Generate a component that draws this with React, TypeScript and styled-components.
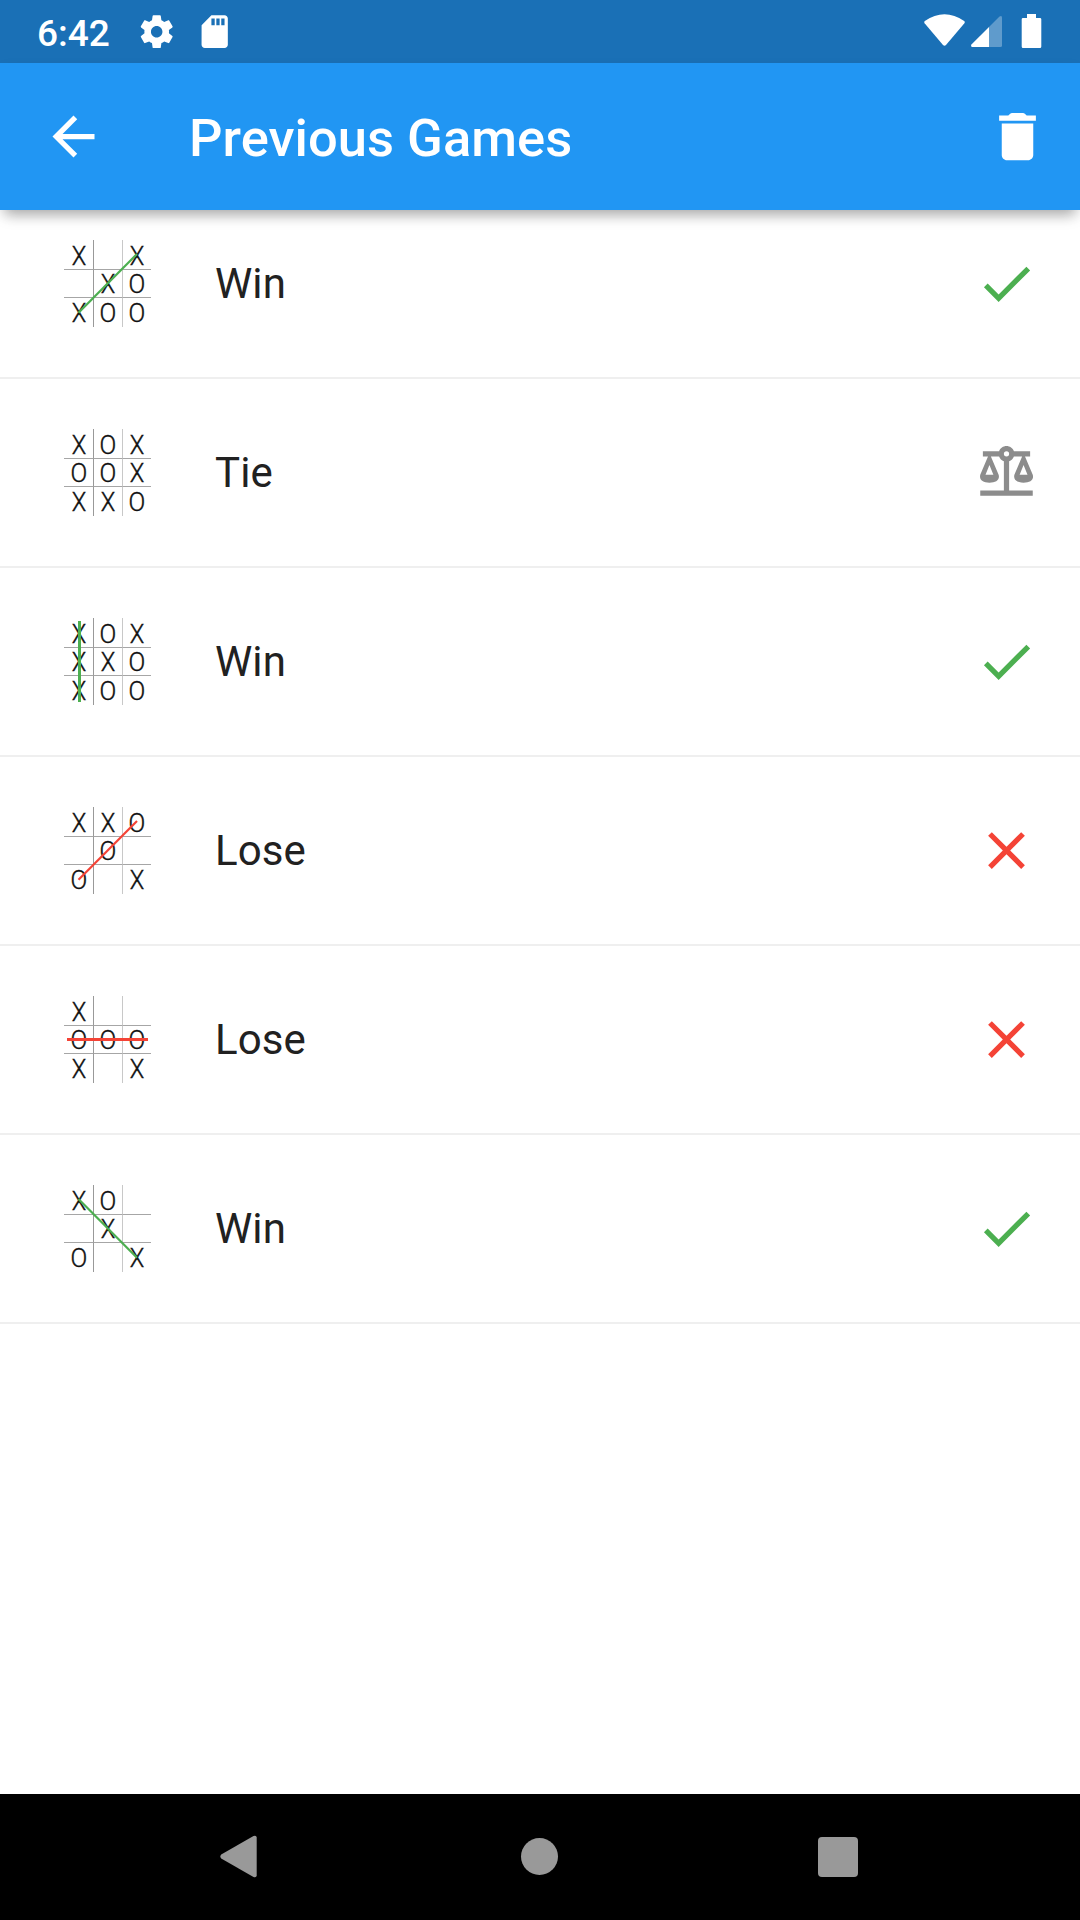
import React from 'react';
import styled, { createGlobalStyle } from 'styled-components';

const GlobalStyle = createGlobalStyle`
  html, body { margin: 0; padding: 0; background: #fff; }
  * { box-sizing: border-box; }
`;

const Screen = styled.div`
  display: flex;
  flex-direction: column;
  width: 1080px;
  height: 1920px;
  overflow: hidden;
  background: #fff;
  font-family: Roboto, sans-serif;
`;

const StatusBar = styled.header`
  display: flex;
  align-items: center;
  flex: none;
  height: 63px;
  padding: 0 38px 0 37px;
  background: #1a70b6;
  color: #fff;
`;

const Clock = styled.time`
  width: 100px;
  padding-top: 5px;
  font-size: 37px;
  font-weight: 500;
  line-height: 60px;
`;

const StatusGroup = styled.div<{ $gap: number }>`
  display: flex;
  align-items: center;
  gap: ${p => p.$gap}px;
`;

const Spacer = styled.div`
  flex: 1;
`;

const Glyph = styled.svg<{ $size: number; $lift?: number }>`
  display: block;
  flex: none;
  width: ${p => p.$size}px;
  height: ${p => p.$size}px;
  margin-bottom: ${p => (p.$lift ?? 0) * 2}px;
  fill: currentColor;
`;

const Signals = styled.svg`
  display: block;
  width: 118px;
  height: 63px;
  fill: currentColor;
`;

const AppBar = styled.nav`
  display: flex;
  align-items: center;
  flex: none;
  height: 147px;
  padding: 0 31.5px 0 42px;
  z-index: 1;
  background: #2196f3;
  color: #fff;
  box-shadow: 0 10px 13px -5px rgba(0, 0, 0, 0.27), 0 5px 14px -3px rgba(0, 0, 0, 0.12);
`;

const Title = styled.h1`
  flex: 1;
  margin: 0 0 0 84px;
  padding-top: 2px;
  font-size: 52.5px;
  font-weight: 500;
  line-height: 62px;
  letter-spacing: 0.03px;
`;

const IconButton = styled.button`
  display: flex;
  padding: 0;
  border: 0;
  background: none;
  color: inherit;
`;

const GameList = styled.main`
  display: flex;
  flex-direction: column;
  flex: 1;
  margin-top: -20px;
`;

const GameRow = styled.article`
  display: flex;
  align-items: center;
  flex: none;
  height: 189px;
  padding: 0 42px 0 64px;
  border-bottom: 2px solid #efefef;
`;

const Result = styled.span`
  flex: 1;
  margin-left: 64px;
  font-size: 42px;
  line-height: 50px;
  letter-spacing: 0.1px;
  color: #212121;
`;

const Trailing = styled.div<{ $color: string }>`
  display: flex;
  color: ${p => p.$color};
`;

const Board = styled.div`
  position: relative;
  display: grid;
  grid-template-columns: 29px 29px 29px;
  grid-template-rows: 29px 28px 30px;
  width: 87px;
  height: 87px;
`;

const Cell = styled.span<{ $col: number; $row: number }>`
  display: flex;
  align-items: center;
  justify-content: center;
  padding-left: ${p => (p.$col === 0 ? 1 : 0)}px;
  padding-right: ${p => (p.$col === 2 ? 1 : 0)}px;
  border-left: ${p => (p.$col ? `1px solid ${p.$col === 1 ? '#999' : '#c8c8c8'}` : '0')};
  border-top: ${p => (p.$row ? '1px solid #a6a6a6' : '0')};
  font-size: 26px;
  font-weight: 300;
  line-height: 28px;
  color: #111;
  -webkit-text-stroke: 0.4px #111;
`;

const Mark = styled.span<{ $narrow: boolean; $row: number }>`
  transform: translateY(${p => (p.$row === 0 ? 0.6 : p.$row === 2 ? -0.5 : 0)}px)
    scaleX(${p => (p.$narrow ? 0.91 : 0.95)});
`;

const Strike = styled.svg`
  position: absolute;
  inset: 0;
  width: 87px;
  height: 87px;
`;

const NavBar = styled.footer`
  display: flex;
  flex: none;
  align-items: center;
  justify-content: space-between;
  height: 126px;
  padding: 0 222px 1px 220px;
  background: #000;
  color: #999;
`;

const NavBack = styled.svg`
  width: 37px;
  height: 43px;
  fill: currentColor;
`;

const NavHome = styled.div`
  width: 37px;
  height: 37px;
  margin-left: 3px;
  border-radius: 50%;
  background: currentColor;
`;

const NavRecent = styled.div`
  width: 40px;
  height: 40px;
  border-radius: 4px;
  background: currentColor;
`;

type Line = { x1: number; y1: number; x2: number; y2: number; w: number };
type Outcome = 'Win' | 'Tie' | 'Lose';
type Game = { result: Outcome; cells: string; line?: Line };

const diagonalUp: Line = { x1: 14.5, y1: 72.7, x2: 73, y2: 14, w: 2.2 };
const diagonalDown: Line = { x1: 14.5, y1: 14, x2: 73, y2: 72.7, w: 2.2 };
const leftColumn: Line = { x1: 15.5, y1: 3, x2: 15.5, y2: 84, w: 3 };
const middleRow: Line = { x1: 3, y1: 43.5, x2: 84, y2: 43.5, w: 3 };

const games: Game[] = [
  { result: 'Win', cells: 'X X XOXOO', line: diagonalUp },
  { result: 'Tie', cells: 'XOXOOXXXO' },
  { result: 'Win', cells: 'XOXXXOXOO', line: leftColumn },
  { result: 'Lose', cells: 'XXO O O X', line: diagonalUp },
  { result: 'Lose', cells: 'X  OOOX X', line: middleRow },
  { result: 'Win', cells: 'XO  X O X', line: diagonalDown },
];

const outcomeStyle: Record<Outcome, { color: string; path: string; lift: number }> = {
  Win: { color: '#4caf50', path: 'M9 16.17L4.83 12l-1.42 1.41L9 19 21 7l-1.41-1.41z', lift: 0 },
  Lose: {
    color: '#f44336',
    path: 'M19 6.41L17.59 5 12 10.59 6.41 5 5 6.41 10.59 12 5 17.59 6.41 19 12 13.41 17.59 19 19 17.59 13.41 12z',
    lift: 0,
  },
  Tie: {
    color: '#8c8c8c',
    path: 'M12,3C10.73,3 9.6,3.8 9.18,5H3V7H4.95L2,14C1.53,16 3,17 5.5,17C8,17 9.56,16 9,14L6.05,7H9.17C9.5,7.85 10.15,8.5 11,8.83V20H2V22H22V20H13V8.82C13.85,8.5 14.5,7.85 14.82,7H17.95L15,14C14.53,16 16,17 18.5,17C21,17 22.56,16 22,14L19.05,7H21V5H14.83C14.4,3.8 13.27,3 12,3M12,5A1,1 0 0,1 13,6A1,1 0 0,1 12,7A1,1 0 0,1 11,6A1,1 0 0,1 12,5M5.5,10.25L7,14H4L5.5,10.25M18.5,10.25L20,14H17L18.5,10.25Z',
    lift: 2.75,
  },
};

function MiniBoard({ game }: { game: Game }) {
  const { line } = game;
  return (
    <Board>
      {game.cells.split('').map((mark, i) => {
        const row = Math.floor(i / 3);
        return (
          <Cell key={i} $col={i % 3} $row={row}>
            <Mark $narrow={mark === 'X'} $row={row}>{mark.trim()}</Mark>
          </Cell>
        );
      })}
      {line && (
        <Strike viewBox="0 0 87 87">
          <line
            x1={line.x1}
            y1={line.y1}
            x2={line.x2}
            y2={line.y2}
            strokeWidth={line.w}
            stroke={outcomeStyle[game.result].color}
          />
        </Strike>
      )}
    </Board>
  );
}

export default function App() {
  return (
    <Screen>
      <GlobalStyle />
      <StatusBar>
        <Clock>6:42</Clock>
        <StatusGroup $gap={19}>
          <Glyph viewBox="0 0 24 24" $size={39.4}>
            <path d="M19.43 12.98c.04-.32.07-.64.07-.98s-.03-.66-.07-.98l2.11-1.65c.19-.15.24-.42.12-.64l-2-3.46c-.12-.22-.39-.3-.61-.22l-2.49 1c-.52-.4-1.08-.73-1.69-.98l-.38-2.65C14.46 2.18 14.25 2 14 2h-4c-.25 0-.46.18-.49.42l-.38 2.65c-.61.25-1.17.59-1.69.98l-2.49-1c-.23-.09-.49 0-.61.22l-2 3.46c-.13.22-.07.49.12.64l2.11 1.65c-.04.32-.07.65-.07.98s.03.66.07.98l-2.11 1.65c-.19.15-.24.42-.12.64l2 3.46c.12.22.39.3.61.22l2.49-1c.52.4 1.08.73 1.69.98l.38 2.65c.03.24.24.42.49.42h4c.25 0 .46-.18.49-.42l.38-2.65c.61-.25 1.17-.59 1.69-.98l2.49 1c.23.09.49 0 .61-.22l2-3.46c.12-.22.07-.49-.12-.64l-2.11-1.65zM12 15.5c-1.93 0-3.5-1.57-3.5-3.5s1.57-3.5 3.5-3.5 3.5 1.57 3.5 3.5-1.57 3.5-3.5 3.5z" />
          </Glyph>
          <Glyph viewBox="0 0 24 24" $size={39.4}>
            <path d="M18 2h-8L4.02 8 4 20c0 1.1.9 2 2 2h12c1.1 0 2-.9 2-2V4c0-1.1-.9-2-2-2zm-6 6h-2V4h2v4zm3 0h-2V4h2v4zm3 0h-2V4h2v4z" />
          </Glyph>
        </StatusGroup>
        <Spacer />
        <Signals viewBox="924 0 118 63">
          <path d="M924.8 21Q944.5 7.500 964.200 21Q965.200 22 964.400 23.300L946 45Q944.500 46.500 943 45L924.600 23.300Q923.800 22 924.800 21Z" />
          <path opacity="0.3" d="M989 27L999.500 16.500Q1002 15 1002 17.500V45.500Q1002 47 1000.500 47H989Z" />
          <path d="M989 27V47H972Q970.500 46.500 971.200 44.800Z" />
          <path d="M1027 14H1036V18H1040Q1041.300 18 1041.300 19.300V46.500Q1041.300 48 1040 48H1023Q1021.700 48 1021.700 46.500V19.300Q1021.700 18 1023 18H1027Z" />
        </Signals>
      </StatusBar>
      <AppBar>
        <IconButton aria-label="Back">
          <Glyph viewBox="0 0 24 24" $size={63}>
            <path d="M20 11H7.830l5.590-5.590L12 4l-8 8 8 8 1.410-1.410L7.830 13H20v-2z" />
          </Glyph>
        </IconButton>
        <Title>Previous Games</Title>
        <IconButton aria-label="Delete">
          <Glyph viewBox="0 0 24 24" $size={63}>
            <path d="M6 19c0 1.100.900 2 2 2h8c1.100 0 2-.900 2-2V7H6v12zM19 4h-3.500l-.710-.710C14.610 3.110 14.350 3 14.090 3H9.910c-.260 0-.520.110-.700.290L8.500 4H5v2h14V4z" />
          </Glyph>
        </IconButton>
      </AppBar>
      <GameList>
        {games.map((game, i) => {
          const style = outcomeStyle[game.result];
          return (
            <GameRow key={i}>
              <MiniBoard game={game} />
              <Result>{game.result}</Result>
              <Trailing $color={style.color}>
                <Glyph viewBox="0 0 24 24" $size={63} $lift={style.lift}>
                  <path d={style.path} />
                </Glyph>
              </Trailing>
            </GameRow>
          );
        })}
      </GameList>
      <NavBar>
        <NavBack viewBox="0 0 37 43">
          <path d="M1.200 19.500L33.500 1Q36.500 0 36.700 2.500V40.500Q36.500 43 33.500 42L1.200 23.500Q-0.500 21.500 1.200 19.500Z" />
        </NavBack>
        <NavHome />
        <NavRecent />
      </NavBar>
    </Screen>
  );
}
